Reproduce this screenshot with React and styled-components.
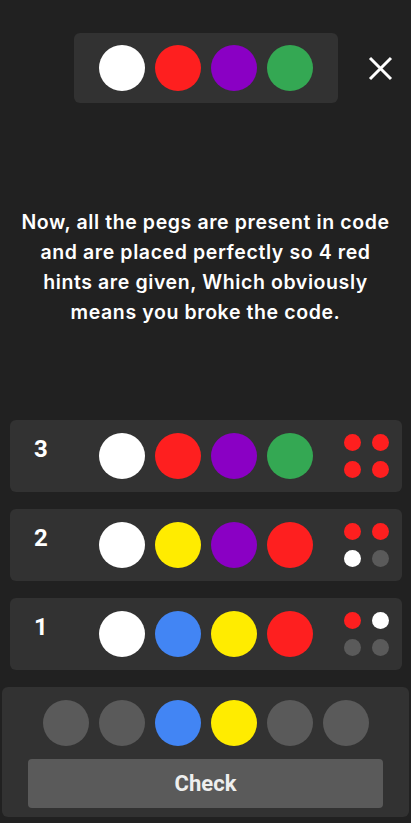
import React from "react";
import styled, { createGlobalStyle } from "styled-components";

const Global = createGlobalStyle`
  html, body { margin: 0; padding: 0; background: #212121; }
  body { font-family: Roboto, "Liberation Sans", sans-serif; }
  * { box-sizing: border-box; }
`;

const COLORS = {
  white: "#ffffff",
  red: "#fe1f1f",
  purple: "#8a00c4",
  green: "#34a853",
  blue: "#4285f4",
  yellow: "#ffec00",
  empty: "#5a5a5a",
};

const Page = styled.div`
  width: 411px;
  height: 823px;
  background: #212121;
  display: flex;
  flex-direction: column;
  overflow: hidden;
`;

const Header = styled.div`
  margin-top: 33px;
  display: grid;
  grid-template-columns: 1fr auto 1fr;
  align-items: center;
`;

const CodeBox = styled.div`
  grid-column: 2;
  background: #323232;
  border-radius: 6px;
  padding: 12px 25px;
  display: flex;
  gap: 10px;
`;

const Peg = styled.div`
  width: 46px;
  height: 46px;
  border-radius: 50%;
  background: ${(p) => p.$color};
  flex: none;
`;

const CloseButton = styled.button`
  grid-column: 3;
  justify-self: start;
  margin-left: 30px;
  width: 25px;
  height: 25px;
  padding: 0;
  border: none;
  background: none;
  display: flex;
  align-items: center;
  justify-content: center;
`;

const Message = styled.p`
  margin: 104px 0 0;
  padding: 0 16px;
  text-align: center;
  color: #ffffff;
  font-family: Inter, "Noto Sans", sans-serif;
  font-weight: 600;
  font-size: 19.5px;
  letter-spacing: 0.6px;
  line-height: 30px;
`;

const Rows = styled.div`
  margin-top: 93px;
  display: flex;
  flex-direction: column;
  gap: 17px;
  padding: 0 9px 0 10px;
`;

const Row = styled.div`
  height: 72px;
  background: #323232;
  border-radius: 6px;
  display: flex;
  align-items: center;
  padding-left: 24px;
`;

const RowNumber = styled.div`
  width: 65px;
  color: #ffffff;
  font-family: Roboto, "Liberation Sans", sans-serif;
  font-weight: 700;
  font-size: 24px;
  line-height: 1;
  margin-top: -14px;
`;

const PegLine = styled.div`
  display: flex;
  gap: 10px;
`;

const Hints = styled.div`
  margin-left: 31px;
  display: grid;
  grid-template-columns: repeat(2, 17px);
  grid-auto-rows: 17px;
  gap: 10px 11px;
`;

const Hint = styled.div`
  width: 17px;
  height: 17px;
  border-radius: 50%;
  background: ${(p) => p.$color};
`;

const Panel = styled.div`
  margin: 17px 2px 0 2px;
  background: #323232;
  border-radius: 6px;
  padding: 13px 26px 9px;
  display: flex;
  flex-direction: column;
  align-items: center;
  gap: 13px;
`;

const CheckButton = styled.button`
  width: 355px;
  height: 49px;
  border: none;
  border-radius: 4px;
  background: #5a5a5a;
  color: #eeeeee;
  font-family: Roboto, "Liberation Sans", sans-serif;
  font-weight: 700;
  font-size: 22px;
  padding: 0;
`;

const rows = [
  { n: 3, pegs: ["white", "red", "purple", "green"], hints: ["red", "red", "red", "red"] },
  { n: 2, pegs: ["white", "yellow", "purple", "red"], hints: ["red", "red", "white", "empty"] },
  { n: 1, pegs: ["white", "blue", "yellow", "red"], hints: ["red", "white", "empty", "empty"] },
];

const current = ["empty", "empty", "blue", "yellow", "empty", "empty"];

export default function App() {
  return (
    <Page>
      <Global />
      <Header>
        <CodeBox>
          {["white", "red", "purple", "green"].map((c, i) => (
            <Peg key={i} $color={COLORS[c]} />
          ))}
        </CodeBox>
        <CloseButton aria-label="close">
          <svg width="25" height="25" viewBox="0 0 25 25">
            <path d="M2 2 L23 23 M23 2 L2 23" stroke="#ffffff" strokeWidth="3" strokeLinecap="butt" />
          </svg>
        </CloseButton>
      </Header>
      <Message>
        Now, all the pegs are present in code and are placed perfectly so 4 red hints are given, Which obviously means you broke the code.
      </Message>
      <Rows>
        {rows.map((r) => (
          <Row key={r.n}>
            <RowNumber>{r.n}</RowNumber>
            <PegLine>
              {r.pegs.map((c, i) => (
                <Peg key={i} $color={COLORS[c]} />
              ))}
            </PegLine>
            <Hints>
              {r.hints.map((c, i) => (
                <Hint key={i} $color={COLORS[c]} />
              ))}
            </Hints>
          </Row>
        ))}
      </Rows>
      <Panel>
        <PegLine>
          {current.map((c, i) => (
            <Peg key={i} $color={COLORS[c]} />
          ))}
        </PegLine>
        <CheckButton>Check</CheckButton>
      </Panel>
    </Page>
  );
}
